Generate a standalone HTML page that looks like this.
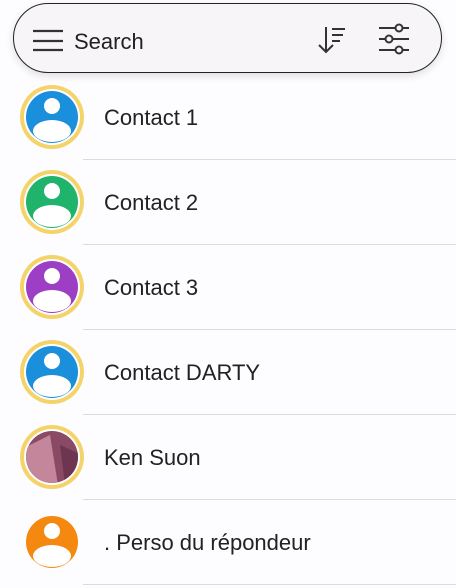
<!DOCTYPE html>
<html><head><style>
body{margin:0;width:456px;height:588px;background:#fdfcfe;font-family:"Liberation Sans",sans-serif;overflow:hidden;position:relative}
.bar{position:absolute;left:13px;top:3px;width:427px;height:68px;border:1.6px solid #222;border-radius:36px;background:#f7f5f8;box-shadow:0 3px 8px rgba(0,0,0,.12)}
.row{position:absolute;left:0;width:456px;height:85px}
.row .t{position:absolute;left:104px;top:0;line-height:85px;font-size:22px;color:#222}
.row .d{position:absolute;left:83px;right:0;bottom:0;height:1.5px;background:#dcdcdc}
.row svg{position:absolute;left:20px;top:10px}
</style></head><body>
<div class="bar">
<svg width="427" height="68" style="position:absolute;left:0;top:0">
<g stroke="#333" stroke-width="2.2"><line x1="19" y1="27" x2="49" y2="27"/><line x1="19" y1="37" x2="49" y2="37"/><line x1="19" y1="46" x2="49" y2="46"/></g>
<text x="60" y="45" font-size="22" fill="#222" font-family="Liberation Sans">Search</text>
<g stroke="#333" stroke-width="2" fill="none"><line x1="312" y1="23" x2="312" y2="48"/><polyline points="305,41 312,48 319,41"/><line x1="318" y1="25" x2="331" y2="25"/><line x1="318" y1="31" x2="329" y2="31"/><line x1="318" y1="37" x2="326" y2="37"/>
<line x1="365" y1="24" x2="395" y2="24"/><line x1="365" y1="35" x2="395" y2="35"/><line x1="365" y1="46" x2="395" y2="46"/>
<circle cx="385" cy="24" r="3.5" fill="#f7f5f8"/><circle cx="375" cy="35" r="3.5" fill="#f7f5f8"/><circle cx="385" cy="46" r="3.5" fill="#f7f5f8"/></g>
</svg></div>
<div class="row" style="top:75px"><svg width="64" height="64"><circle cx="32" cy="32" r="32" fill="#f4d46a"/><circle cx="32" cy="32" r="28" fill="#fff"/><clipPath id="c1"><circle cx="32" cy="32" r="26"/></clipPath><circle cx="32" cy="32" r="26" fill="#1a8fdc"/><g clip-path="url(#c1)" fill="#fff"><circle cx="32" cy="21" r="8"/><ellipse cx="32" cy="46" rx="19" ry="11"/></g></svg><span class="t">Contact 1</span><div class="d"></div></div>
<div class="row" style="top:160px"><svg width="64" height="64"><circle cx="32" cy="32" r="32" fill="#f4d46a"/><circle cx="32" cy="32" r="28" fill="#fff"/><circle cx="32" cy="32" r="26" fill="#1fb36c"/><g clip-path="url(#c1)" fill="#fff"><circle cx="32" cy="21" r="8"/><ellipse cx="32" cy="46" rx="19" ry="11"/></g></svg><span class="t">Contact 2</span><div class="d"></div></div>
<div class="row" style="top:245px"><svg width="64" height="64"><circle cx="32" cy="32" r="32" fill="#f4d46a"/><circle cx="32" cy="32" r="28" fill="#fff"/><circle cx="32" cy="32" r="26" fill="#9d3fc4"/><g clip-path="url(#c1)" fill="#fff"><circle cx="32" cy="21" r="8"/><ellipse cx="32" cy="46" rx="19" ry="11"/></g></svg><span class="t">Contact 3</span><div class="d"></div></div>
<div class="row" style="top:330px"><svg width="64" height="64"><circle cx="32" cy="32" r="32" fill="#f4d46a"/><circle cx="32" cy="32" r="28" fill="#fff"/><circle cx="32" cy="32" r="26" fill="#1a8fdc"/><g clip-path="url(#c1)" fill="#fff"><circle cx="32" cy="21" r="8"/><ellipse cx="32" cy="46" rx="19" ry="11"/></g></svg><span class="t">Contact DARTY</span><div class="d"></div></div>
<div class="row" style="top:415px"><svg width="64" height="64"><circle cx="32" cy="32" r="32" fill="#f4d46a"/><circle cx="32" cy="32" r="28" fill="#fff"/><circle cx="32" cy="32" r="26" fill="#8a4a66"/><g clip-path="url(#c1)"><path d="M6 22 L30 10 L38 60 L6 60Z" fill="#c4869a"/><path d="M40 20 L58 28 L58 50 L45 60Z" fill="#6d3550"/></g></svg><span class="t">Ken Suon</span><div class="d"></div></div>
<div class="row" style="top:500px"><svg width="64" height="64"><circle cx="32" cy="32" r="26" fill="#f5880f"/><g clip-path="url(#c1)" fill="#fff"><circle cx="32" cy="21" r="8"/><ellipse cx="32" cy="46" rx="19" ry="11"/></g></svg><span class="t">. Perso du répondeur</span><div class="d"></div></div>
</body></html>
